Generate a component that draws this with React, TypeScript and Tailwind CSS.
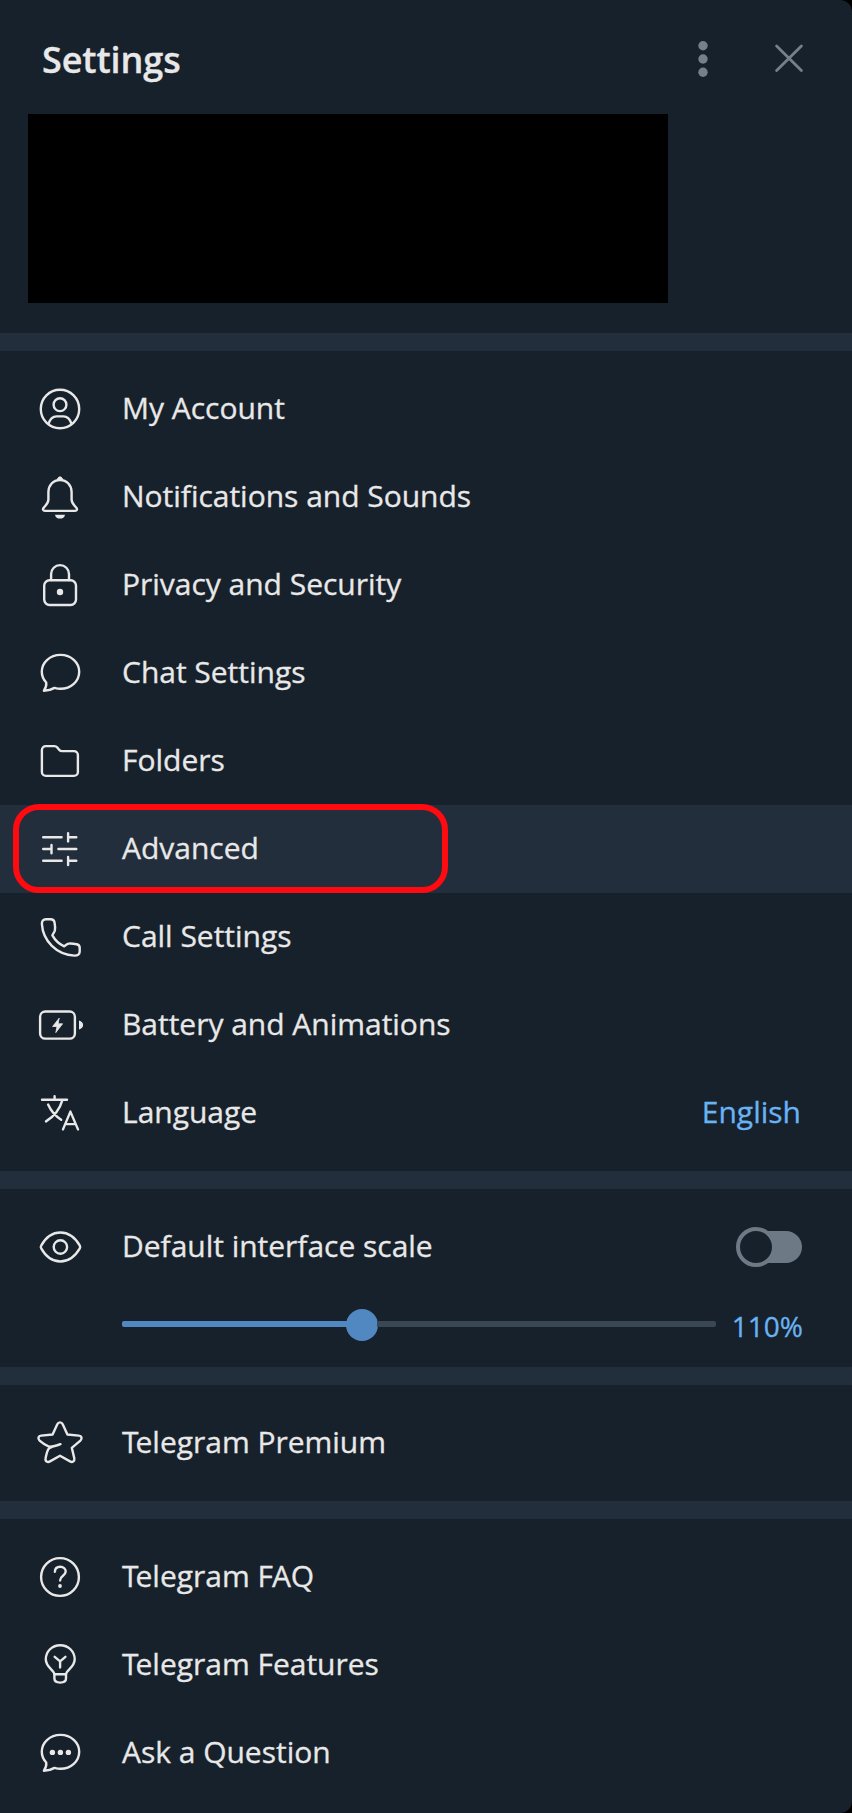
import type { ReactNode } from "react";

function Icon({ children }: { children: ReactNode }) {
  return (
    <svg
      className="h-12 w-12 shrink-0"
      viewBox="0 0 48 48"
      fill="none"
      stroke="currentColor"
      strokeWidth={2.4}
      strokeLinecap="round"
      strokeLinejoin="round"
      aria-hidden="true"
    >
      {children}
    </svg>
  );
}

const bubble =
  "M18.5 38.9C20.5 39.5 22.5 39.8 24.5 39.8C35 39.8 43.2 32.4 43.2 22.8C43.2 13.4 35 5.9 24.5 5.9C14 5.9 5.8 13.4 5.8 22.8C5.8 27 7.4 30.6 10.2 33.5C10.6 36.3 9.6 39.4 7.9 41.8C12 41.7 15.5 40.7 18.5 38.9Z";

const icons = {
  account: (
    <Icon>
      <circle cx="24" cy="24" r="19.2" />
      <circle cx="24" cy="19.7" r="6.4" />
      <path d="M12.5 38.8C14.2 33.6 17 31.4 20.5 31.4H27.5C31 31.4 33.8 33.6 35.5 38.8" />
    </Icon>
  ),
  bell: (
    <Icon>
      <path d="M24 7C17.2 7 12.4 12.3 12.4 19V26.5C12.4 30.2 10 32 7.8 34.6C6.4 36.3 7 37.9 9 37.9H39C41 37.9 41.6 36.3 40.2 34.6C38 32 35.6 30.2 35.6 26.5V19C35.6 12.3 30.8 7 24 7Z" />
      <path d="M21.4 7C21.4 2.8 26.6 2.8 26.6 7Z" fill="currentColor" strokeWidth={1} />
      <path d="M19 41.7H29C28.6 44.2 26.6 45.6 24 45.6S19.4 44.2 19 41.7Z" fill="currentColor" stroke="none" />
    </Icon>
  ),
  lock: (
    <Icon>
      <rect x="8.2" y="19.2" width="31.8" height="24.8" rx="5.4" />
      <path d="M15.1 19V13.1A8.95 8.95 0 0 1 33 13.1V19" />
      <circle cx="24" cy="31" r="3.2" fill="currentColor" stroke="none" />
    </Icon>
  ),
  chat: (
    <Icon>
      <path d={bubble} />
    </Icon>
  ),
  folder: (
    <Icon>
      <path d="M5.9 13V35A3.9 3.9 0 0 0 9.8 38.9H38A3.9 3.9 0 0 0 41.9 35V18A3.9 3.9 0 0 0 38 14.1H26.2C24.8 14.1 24 13.8 23.1 12.7L21.3 10.5C20.5 9.5 19.6 9.1 18.4 9.1H9.8A3.9 3.9 0 0 0 5.9 13Z" />
    </Icon>
  ),
  sliders: (
    <Icon>
      <path d="M7.2 12.3H25.6M32.1 8.2V16.4M32.1 12.3H40.3M7.2 24H15.5M15.5 19.9V28.3M22.4 24H40.3M7.2 35.8H25.6M32.1 32V40M32.1 35.8H40.3" />
    </Icon>
  ),
  phone: (
    <Icon>
      <path d="M10 6.2H14.6C16.9 6.2 18.1 7.2 18.5 9.3C19 12 19.4 14.5 18.9 17.2C18.4 19.6 17 20.3 16.4 22.4C18.6 26.4 23.4 31.3 28.2 33.3C29.8 32.6 30.4 31 32.8 30.6C35.4 30.3 38 30.7 40.6 31.2C42.8 31.6 43.7 32.8 43.7 34.8V38.4C43.7 41.2 41.8 42.7 38.4 42.6C20.5 41.5 7 28 5.9 11.1C5.7 8 7.2 6.2 10 6.2Z" />
    </Icon>
  ),
  battery: (
    <Icon>
      <rect x="4.1" y="10.5" width="34.8" height="27.1" rx="5.2" />
      <path d="M43 19.6C45.6 20.2 47.1 21.9 47.1 24S45.6 27.8 43 28.4Z" fill="currentColor" stroke="none" />
      <path d="M23 17.4L16.6 25.5H21L19.8 31.6L26.6 22.8H22.3Z" fill="currentColor" strokeWidth={0.8} />
    </Icon>
  ),
  language: (
    <Icon>
      <path d="M6 10.8H31M18.6 7.2V10.8M26.4 11.2C23.8 20.2 18.4 27.4 10 32.4M12.1 15.6C14.9 22 19.2 27 25.2 30.8M27 40.4L34.4 22.6L42 40.4M29.4 35.1H39.6" />
    </Icon>
  ),
  eye: (
    <Icon>
      <path d="M5.2 22.6C10 14 16.4 9.5 24.4 9.5S38.8 14 43.8 22.6C44.4 23.6 44.4 24.4 43.8 25.4C38.8 34 32.4 38.5 24.4 38.5S10 34 5.2 25.4C4.6 24.4 4.6 23.6 5.2 22.6Z" />
      <circle cx="24.4" cy="24" r="6.7" />
    </Icon>
  ),
  star: (
    <Icon>
      <path d="M24.5 25.2C20.8 26.6 16.6 28 13 27.7C9.6 26.4 6.6 24.2 3.6 21.6C1.5 19.6 2.3 16.9 5.2 16.6L16.6 15.5L21.3 5.2C22.4 2.7 25.6 2.7 26.7 5.2L31.4 15.5L42.8 16.6C45.7 16.9 46.5 19.6 44.4 21.6L35.8 28.8L38.3 39.4C38.8 42.3 36.4 43.7 34 42.4L24 36.8L14 42.4C11.6 43.7 8.9 42.4 9.6 39.2C10.3 35.6 11 31.9 12.9 29.5C14.4 27.8 19.5 27.2 24.5 25.2Z" />
    </Icon>
  ),
  question: (
    <Icon>
      <circle cx="24" cy="24" r="18.9" />
      <path d="M18.9 18.7C19 15.7 21.1 13.8 24.2 13.8S29.7 15.8 29.7 18.6C29.7 23 24.1 22.6 24.1 27.4" />
      <circle cx="24" cy="33" r="1.9" fill="currentColor" stroke="none" />
    </Icon>
  ),
  bulb: (
    <Icon>
      <path d="M18.4 33.3C17.9 28.6 9.8 26.4 9.8 18.3C9.8 10.3 16.2 4.2 24.2 4.2S38.7 10.3 38.7 18.3C38.7 26.4 30.5 28.6 30 33.3Z" />
      <path d="M18.4 33.3V37.6C18.4 40.6 20.2 41.6 24.2 41.6S30 40.6 30 37.6V33.3M18.7 15.8L24.1 20.3L29.4 15.8M24.1 20.3V26.4" />
    </Icon>
  ),
  ask: (
    <Icon>
      <path d={bubble} />
      <g fill="currentColor" stroke="none">
        <circle cx="16.4" cy="23.4" r="2.7" />
        <circle cx="24.4" cy="23.4" r="2.7" />
        <circle cx="32.4" cy="23.4" r="2.7" />
      </g>
    </Icon>
  ),
};

type RowProps = {
  icon: keyof typeof icons;
  label: ReactNode;
  active?: boolean;
  children?: ReactNode;
};

function Row({ icon, label, active, children }: RowProps) {
  return (
    <div
      className={`relative flex h-[88px] items-center pr-[50px] pl-9 ${active ? "bg-[#232e3c]" : ""}`}
    >
      {icons[icon]}
      <span className="ml-[38px] grow pb-[3px] tracking-[-0.02px] whitespace-nowrap">{label}</span>
      {children}
      {active && (
        <div className="absolute -top-px left-[13px] h-[89px] w-[435px] rounded-[26px] border-6 border-[#ff0a10]" />
      )}
    </div>
  );
}

function Telegram({ children }: { children: ReactNode }) {
  return (
    <>
      <span className="tracking-[-3px]">T</span>elegram {children}
    </>
  );
}

function Divider() {
  return <div className="h-[18px] bg-[#232e3c]" />;
}

export default function App() {
  return (
    <div className="h-[1813px] w-[852px] overflow-hidden bg-black">
      <div className="h-full rounded-r-[12px] bg-[#17212b] font-['Open_Sans','Noto_Sans',sans-serif] text-[30px] text-[#e9e8e8] [-webkit-text-stroke:0.3px_currentColor]">
        <header className="flex h-[114px] items-center pr-[46px] pl-[42px]">
          <h1 className="grow pt-[5px] text-[36px] font-semibold tracking-[-0.1px]">Settings</h1>
          <svg className="h-9 w-3 text-[#75808a]" viewBox="0 0 12 36" fill="currentColor" overflow="visible">
            <circle cx="6" cy="6.7" r="4.7" />
            <circle cx="6" cy="20" r="4.7" />
            <circle cx="6" cy="33.2" r="4.7" />
          </svg>
          <svg
            className="ml-[63px] h-9 w-[34px] text-[#75808a]"
            viewBox="0 0 34 36"
            stroke="currentColor"
            strokeWidth={2.8}
            strokeLinecap="round"
          >
            <path d="M4.6 6.9L29.4 31.5M29.4 6.9L4.6 31.5" />
          </svg>
        </header>
        <div className="ml-7 h-[189px] w-[640px] bg-black" />
        <div className="h-[30px]" />
        <Divider />
        <nav className="py-3.5">
          <Row icon="account" label="My Account" />
          <Row icon="bell" label="Notifications and Sounds" />
          <Row icon="lock" label="Privacy and Security" />
          <Row icon="chat" label="Chat Settings" />
          <Row icon="folder" label="Folders" />
          <Row icon="sliders" label="Advanced" active />
          <Row icon="phone" label="Call Settings" />
          <Row icon="battery" label="Battery and Animations" />
          <Row icon="language" label="Language">
            <span className="mr-px pb-[3px] text-[#6ab3f3]">English</span>
          </Row>
        </nav>
        <Divider />
        <section className="h-[178px] pt-3.5">
          <Row icon="eye" label="Default interface scale">
            <div className="flex h-10 w-[66px] items-center">
              <div className="z-10 h-10 w-10 shrink-0 rounded-full border-4 border-[#6d7984] bg-[#17212b]" />
              <div className="-ml-5 h-8 w-[46px] shrink-0 rounded-r-full bg-[#6d7984]" />
            </div>
          </Row>
          <div className="flex h-[66px] items-center justify-between pr-[49px] pl-[122px]">
            <div className="flex h-8 w-[594px] items-center">
              <div className="h-1.5 w-[225px] rounded-l-[2px] bg-[#5288c1]" />
              <div className="-mx-px mt-0.5 h-8 w-8 shrink-0 rounded-full bg-[#5288c1]" />
              <div className="h-1.5 grow rounded-r-[2px] bg-[#3a4754]" />
            </div>
            <span className="pt-[3px] text-[28px] text-[#6ab3f3]">110%</span>
          </div>
        </section>
        <Divider />
        <section className="py-3.5">
          <Row icon="star" label={<Telegram>Premium</Telegram>} />
        </section>
        <Divider />
        <section className="pt-3.5">
          <Row
            icon="question"
            label={
              <Telegram>
                <span className="tracking-[-1px]">F</span>AQ
              </Telegram>
            }
          />
          <Row icon="bulb" label={<Telegram>Features</Telegram>} />
          <Row icon="ask" label="Ask a Question" />
        </section>
      </div>
    </div>
  );
}
